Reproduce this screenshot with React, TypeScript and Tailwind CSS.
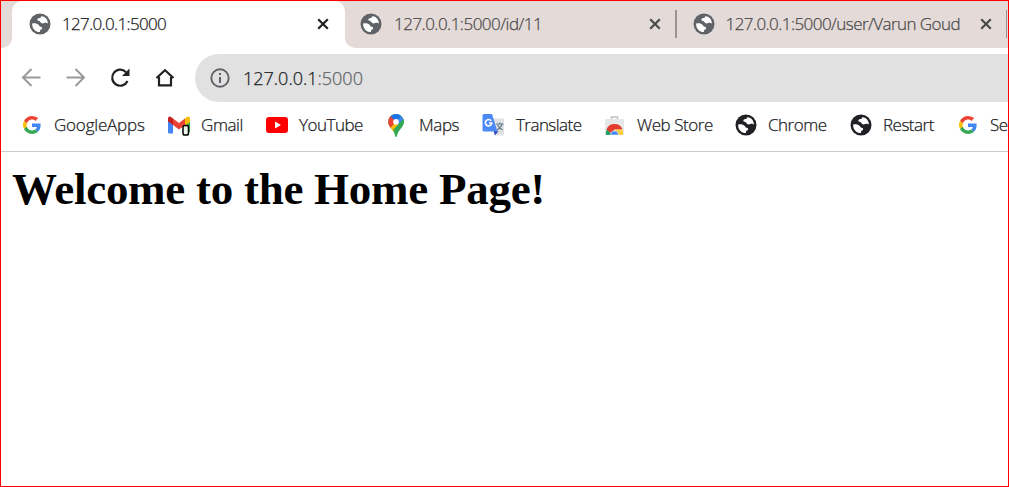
import React from 'react';

const Globe = ({ className }: { className: string }) => (
  <svg viewBox="0 0 22 22" className={`h-[22px] w-[22px] shrink-0 ${className}`}>
    <circle cx="11" cy="11" r="10.5" fill="currentColor" />
    <path transform="translate(.9 .9) scale(.92)" d="M2.500 10.300c2.500-.3 5 0 6.500 1.200 1.500 1.100 1.100 2.300 2.700 2.500 1.300.2 1.700.8 1.500 1.800-.3 1.200-1.900 1.200-2.200 2.300l-.1 1.600C5.800 19.600 2 15.600 2.500 10.300zM12.800 2.500c-.9.4-1.300 1.100-1.200 2-1.500 0-3.300.4-3.500 1.700-.1 1.200.8 1.500 2 1.600 1.300.1 1.500 2.500 3.500 2.600 1.500.1 2.300-.8 3.500-.7 1 .1 1.500.7 2.400.7.300-3.900-2.600-7.500-6.700-7.900z" fill="white" />
  </svg>
);

const GoogleG = () => (
  <svg viewBox="0 0 48 48" className="h-[18px] w-[18px] shrink-0">
    <path fill="#EA4335" d="M24 9.500c3.540 0 6.710 1.220 9.210 3.600l6.850-6.850C35.900 2.380 30.470 0 24 0 14.620 0 6.510 5.380 2.560 13.220l7.980 6.190C12.430 13.720 17.740 9.500 24 9.500z" />
    <path fill="#4285F4" d="M46.980 24.550c0-1.570-.15-3.090-.38-4.550H24v9.020h12.940c-.58 2.960-2.260 5.480-4.780 7.180l7.730 6c4.510-4.180 7.090-10.360 7.090-17.650z" />
    <path fill="#FBBC05" d="M10.530 28.590A14.500 14.500 0 0 1 9.770 24c0-1.600.27-3.140.76-4.590l-7.980-6.190A23.900 23.900 0 0 0 0 24c0 3.870.92 7.540 2.560 10.780z" />
    <path fill="#34A853" d="M24 48c6.480 0 11.930-2.130 15.890-5.810l-7.730-6c-2.150 1.450-4.920 2.300-8.160 2.300-6.260 0-11.570-4.220-13.470-9.910l-7.980 6.190C6.510 42.620 14.620 48 24 48z" />
  </svg>
);

const Gmail = () => (
  <svg viewBox="0 0 24 22" className="h-[22px] w-6 shrink-0">
    <path fill="#4285F4" d="M1 5l5 4v10.500H2.500Q1 19.500 1 18z" />
    <path fill="#34A853" d="M18 9l5-4v13H18z" />
    <path fill="#FBBC04" d="M18 4.500l2-1.500q3-1.500 3 2v3l-5 4z" />
    <path fill="#EA4335" d="M6 4.500l6 4.500 6-4.500v6.500l-6 4.500L6 11z" />
    <path fill="#C5221F" d="M1 5q0-3.500 3-2l2 1.500V11L1 7.500z" />
    <rect x="16" y="11.500" width="5.500" height="9.500" rx="1.800" fill="#e9f5e9" stroke="black" strokeWidth="1.500" />
  </svg>
);

const YouTube = () => (
  <svg viewBox="0 0 22 16" className="h-4 w-[22px] shrink-0">
    <rect width="22" height="16" rx="3" fill="#f00" />
    <path d="M9 4.500l6 3.500-6 3.500z" fill="white" />
  </svg>
);

const Maps = () => (
  <svg viewBox="0 0 16 23" className="h-[23px] w-4 shrink-0">
    <clipPath id="pin"><path d="M8 0a7.800 7.800 0 0 1 7.800 7.800c0 5.500-5.300 7.200-6.800 13.500Q8.700 23 8 23t-1-1.700C5.500 15 .2 13.300.2 7.800A7.800 7.800 0 0 1 8 0z" /></clipPath>
    <g clipPath="url(#pin)">
      <rect width="16" height="23" fill="#34A853" />
      <path d="M0 13L8 4l5 5-8.500 9L0 18z" fill="#FBBC04" />
      <path d="M0 14V0h4l4 7.800-5.500 6z" fill="#EA4335" />
      <path d="M2 2L8 7.800 15 .500 8-1z" fill="#1A73E8" />
      <path d="M8 7.800l6-6.500 3 5-5.500 6z" fill="#4285F4" />
      <path d="M16 4v19H8V17l-3-1 11-12z" fill="#34A853" />
    </g>
    <circle cx="8" cy="7.800" r="2.900" fill="white" />
  </svg>
);

const Translate = () => (
  <svg viewBox="0 0 23 22" className="h-[22px] w-[23px] shrink-0">
    <path d="M8 4.500h12.500q1.500 0 1.500 1.500V20q0 1.500-1.500 1.500h-6z" fill="#dfe1e3" />
    <path d="M11.500 17h5l-3.500 4.500z" fill="#3445b8" />
    <path d="M2 0h8l5.500 17.500H2Q.500 17.500.500 16V1.500Q.500 0 2 0z" fill="#4c8bf5" />
    <path d="M9.200 6.800A3.200 3.200 0 1 0 9.800 9H7" fill="none" stroke="white" strokeWidth="1.600" />
    <path d="M14 10h7.500M17.800 8.500V10M20 10c-.5 2.500-2.500 4.500-4.800 6M15.500 11c1 2 2.500 3.500 5 5" fill="none" stroke="#607988" strokeWidth="1.200" />
  </svg>
);

const WebStore = () => (
  <svg viewBox="0 0 19 19" className="h-[19px] w-[19px] shrink-0">
    <path d="M6.500 3V1h6v2" fill="none" stroke="#bfc1c3" strokeWidth="1.500" />
    <path d="M0 3h19v15q0 1-1 1H1q-1 0-1-1z" fill="#e6e7e8" />
    <path d="M1 19A8.500 8.500 0 0 1 2.500 12.500l4 6.500z" fill="#1da362" />
    <path d="M1.500 13.500A8.600 8.600 0 0 1 17.500 13.500H9.500L6 17z" fill="#e33b2e" />
    <path d="M10 13.500h7.500q1 2.500.5 5.500h-6z" fill="#ffcd41" />
    <path d="M5.500 19a4 4 0 0 1 8 0z" fill="#4285f4" stroke="white" strokeWidth=".500" />
  </svg>
);

const Close = ({ className }: { className: string }) => (
  <svg viewBox="0 0 12 12" className={`h-3 w-3 shrink-0 ${className}`}>
    <path d="M1.200 1.200l9.600 9.600M10.800 1.200L1.200 10.800" stroke="currentColor" strokeWidth="2.200" />
  </svg>
);

const Label = ({ className, children }: { className: string; children: React.ReactNode }) => (
  <span className={`shrink-0 whitespace-nowrap [-webkit-text-stroke:0.25px_currentColor] ${className}`}>{children}</span>
);

export default function App() {
  return (
    <div className="flex h-[487px] w-[1009px] flex-col overflow-hidden border border-[#f00] bg-white font-['Open_Sans','Noto_Sans',sans-serif] text-[17px] font-light text-[#202124]">
      <div className="flex h-[47px] shrink-0 bg-white">
        <div className="w-[11px] shrink-0 rounded-br-[10px] bg-[#e4dbd9]" />
        <div className="w-[333px] shrink-0 bg-[#e4dbd9]">
          <div className="flex h-full items-center rounded-t-[10px] bg-white pb-[1px] pl-[17px]">
            <Globe className="text-[#5f6368]" />
            <Label className="ml-[11px] w-[255px] tracking-[-0.65px]">127.0.0.1:5000</Label>
            <Close className="text-[#202124]" />
          </div>
        </div>
        <div className="flex flex-1 items-center rounded-bl-[10px] bg-[#e4dbd9] pb-[1px] pl-[15px] text-[#4c4a4a]">
          <Globe className="text-[#5f6368]" />
          <Label className="ml-3 w-[255px] tracking-[-0.5px]">127.0.0.1:5000/id/11</Label>
          <Close className="text-[#4a4a4a]" />
          <div className="ml-[14px] h-7 w-[1.500px] shrink-0 bg-[#999291]" />
          <Globe className="ml-4 text-[#5f6368]" />
          <Label className="ml-[11px] w-[254px] tracking-[-0.55px]">127.0.0.1:5000/user/Varun Goud</Label>
          <Close className="text-[#4a4a4a]" />
          <div className="ml-[14px] h-7 w-[1.500px] shrink-0 bg-[#999291]" />
        </div>
      </div>
      <div className="flex h-[60px] shrink-0 items-center pb-[1px] pl-5">
        <svg viewBox="0 0 20 20" className="h-5 w-5 shrink-0" fill="none" stroke="#999" strokeWidth="2"><path d="M19.500 9.500H2.500M10.500 1L2 9.500l8.500 8.500" /></svg>
        <svg viewBox="0 0 20 20" className="ml-[25px] h-5 w-5 shrink-0" fill="none" stroke="#999" strokeWidth="2"><path d="M.500 9.500h17M9.500 1L18 9.500l-8.500 8.500" /></svg>
        <svg viewBox="0 0 20 20" className="ml-6 h-5 w-5 shrink-0"><path d="M17.500 13A8 8 0 1 1 16 4.200" fill="none" stroke="#202124" strokeWidth="2.200" /><path d="M19.500.5V8H12z" fill="#202124" /></svg>
        <svg viewBox="0 0 20 20" className="ml-[25px] h-5 w-5 shrink-0"><path d="M1.500 10L10 2.200 18.500 10M4 9v8.300h12V9" fill="none" stroke="#202124" strokeWidth="2.200" /></svg>
        <div className="ml-5 flex h-12 flex-1 items-center rounded-l-full bg-[#e1e1e1] pl-[15px]">
          <svg viewBox="0 0 20 20" className="h-5 w-5 shrink-0"><circle cx="10" cy="10" r="8.700" fill="none" stroke="#5f6368" strokeWidth="1.900" /><path d="M9 5h2v2H9zM9 9h2v6H9z" fill="#5f6368" /></svg>
          <Label className="ml-[13px] pt-[2px] text-[18px] tracking-[0px]">127.0.0.1<span className="text-[#5f6368]">:5000</span></Label>
        </div>
      </div>
      <div className="flex h-[44px] shrink-0 items-start border-b border-[#ccc]">
        <div className="flex h-[34px] items-center pl-[22px]">
          <GoogleG /><Label className="ml-[13px] w-[113px] tracking-[-0.2px]">GoogleApps</Label>
          <Gmail /><Label className="ml-[10px] w-[65px] tracking-[-0.4px]">Gmail</Label>
          <YouTube /><Label className="ml-[11px] w-[89px] tracking-[-0.5px]">YouTube</Label>
          <Maps /><Label className="ml-[15px] w-[63px] tracking-[-0.4px]">Maps</Label>
          <Translate /><Label className="ml-[11px] w-[89px] tracking-[-0.55px]">Translate</Label>
          <WebStore /><Label className="ml-[13px] w-[98px] tracking-[-0.45px]">Web Store</Label>
          <Globe className="text-[#202124]" /><Label className="ml-[11px] w-[82px] tracking-[-0.5px]">Chrome</Label>
          <Globe className="text-[#202124]" /><Label className="ml-[11px] w-[76px] tracking-[-0.5px]">Restart</Label>
          <GoogleG /><Label className="ml-[13px] tracking-[-0.5px]">Se</Label>
        </div>
      </div>
      <main className="pl-[11px] pt-[9px]">
        <h1 className="whitespace-nowrap font-['Liberation_Serif',serif] text-[45px] font-bold leading-[56px] tracking-[-0.27px] text-black">Welcome to the Home Page!</h1>
      </main>
    </div>
  );
}
